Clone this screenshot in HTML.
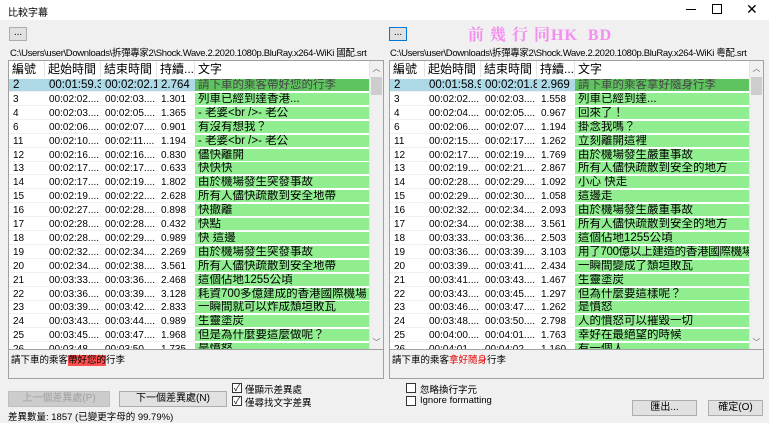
<!DOCTYPE html>
<html><head><meta charset="utf-8"><style>
*{box-sizing:border-box;margin:0;padding:0}
body{width:769px;height:421px;background:#f0f0f0;font-family:"Liberation Sans","Noto Sans CJK TC",sans-serif;position:relative;overflow:hidden;color:#000}
.abs{position:absolute}
.title{top:0;left:0;width:769px;height:20px;background:#fff}
.list{position:absolute;top:60px;height:290px;background:#fff;border:1px solid #a0a0a0;overflow:hidden}
.hdr{position:absolute;top:0;left:0;height:16px;font-size:12px;line-height:16px}
.hdr span{position:absolute;top:0;height:16px;border-right:1px solid #e5e5e5;padding-left:3px;white-space:nowrap;overflow:hidden}
.row{position:absolute;left:0;height:13.9px;font-size:10px;line-height:13px}
.row span{position:absolute;top:0;height:13px;padding-left:4px;white-space:nowrap;overflow:hidden;border-bottom:1px solid #f0f0f0}
.row span.t{background:#90ee90;font-size:11.5px;border-bottom:1px solid #fff;padding-left:3px}
.sel span{background:#add8e6;font-size:11.5px}
.sel span.t{background:#5fc35f;color:#444}
.sb{position:absolute;top:0;width:14px;height:290px;background:#f0f0f0;border-left:1px solid #e5e5e5}
.sb i{position:absolute;left:1px;top:16px;width:11px;height:18px;background:#cdcdcd}
.sb b{position:absolute;left:0;width:13px;text-align:center;font-size:8px;color:#606060;font-weight:normal}
.tb{position:absolute;top:349px;height:30px;background:#f0f0f0;border:1px solid #a0a0a0;font-size:9.5px;padding:2px 2px}
.btn{position:absolute;background:#e1e1e1;border:1px solid #adadad;font-size:10px;text-align:center;line-height:14px}
.cb{position:absolute;width:10px;height:10px;border:1px solid #333;background:#fff;font-size:9px;line-height:8px;text-align:center}
.lbl{position:absolute;font-size:9.5px}
</style></head><body>
<div class="abs title"></div>
<div class="abs" style="left:8px;top:4px;font-size:10px">比較字幕</div>
<div class="abs" style="left:686px;top:9px;width:10px;height:1px;background:#000"></div>
<div class="abs" style="left:712px;top:4px;width:10px;height:10px;border:1px solid #000"></div>
<div class="abs" style="left:746px;top:1px;font-size:14px;line-height:16px">✕</div>
<div class="btn" style="left:9px;top:27px;width:18px;height:14px;line-height:10px">...</div>
<div class="btn" style="left:389px;top:27px;width:18px;height:14px;line-height:10px;border-color:#0078d7">...</div>
<div class="abs" style="left:468px;top:22px;font-family:'Liberation Serif','Noto Serif CJK SC',serif;font-weight:bold;font-size:16px;color:#f58cf0;letter-spacing:1px">前 幾 行 同HK&nbsp;&nbsp;BD</div>
<div class="abs" style="left:10px;top:45px;font-size:9.5px;letter-spacing:-0.35px">C:\Users\user\Downloads\拆彈專家2\Shock.Wave.2.2020.1080p.BluRay.x264-WiKi 國配.srt</div>
<div class="abs" style="left:390px;top:45px;font-size:9.5px;letter-spacing:-0.35px">C:\Users\user\Downloads\拆彈專家2\Shock.Wave.2.2020.1080p.BluRay.x264-WiKi 粵配.srt</div>

<div class="list" style="left:8px;width:376px">
<div class="hdr"><span style="left:0;width:36px">編號</span><span style="left:36px;width:56px">起始時間</span><span style="left:92px;width:56px">結束時間</span><span style="left:148px;width:38px">持續...</span><span style="left:186px;width:176px">文字</span></div>
<div class="row sel" style="top:18px"><span style="left:0;width:36px">2</span><span style="left:36px;width:56px">00:01:59.35</span><span style="left:92px;width:56px">00:02:02.11</span><span style="left:148px;width:38px">2.764</span><span class="t" style="left:186px;width:174px">請下車的乘客帶好您的行李</span></div>
<div class="row" style="top:31.9px"><span style="left:0;width:36px">3</span><span style="left:36px;width:56px">00:02:02....</span><span style="left:92px;width:56px">00:02:03....</span><span style="left:148px;width:38px">1.301</span><span class="t" style="left:186px;width:174px">列車已經到達香港...</span></div>
<div class="row" style="top:45.8px"><span style="left:0;width:36px">4</span><span style="left:36px;width:56px">00:02:03....</span><span style="left:92px;width:56px">00:02:05....</span><span style="left:148px;width:38px">1.365</span><span class="t" style="left:186px;width:174px">- 老婆&lt;br /&gt;- 老公</span></div>
<div class="row" style="top:59.7px"><span style="left:0;width:36px">6</span><span style="left:36px;width:56px">00:02:06....</span><span style="left:92px;width:56px">00:02:07....</span><span style="left:148px;width:38px">0.901</span><span class="t" style="left:186px;width:174px">有沒有想我？</span></div>
<div class="row" style="top:73.6px"><span style="left:0;width:36px">11</span><span style="left:36px;width:56px">00:02:10....</span><span style="left:92px;width:56px">00:02:11....</span><span style="left:148px;width:38px">1.194</span><span class="t" style="left:186px;width:174px">- 老婆&lt;br /&gt;- 老公</span></div>
<div class="row" style="top:87.5px"><span style="left:0;width:36px">12</span><span style="left:36px;width:56px">00:02:16....</span><span style="left:92px;width:56px">00:02:16....</span><span style="left:148px;width:38px">0.830</span><span class="t" style="left:186px;width:174px">儘快離開</span></div>
<div class="row" style="top:101.4px"><span style="left:0;width:36px">13</span><span style="left:36px;width:56px">00:02:17....</span><span style="left:92px;width:56px">00:02:17....</span><span style="left:148px;width:38px">0.633</span><span class="t" style="left:186px;width:174px">快快快</span></div>
<div class="row" style="top:115.3px"><span style="left:0;width:36px">14</span><span style="left:36px;width:56px">00:02:17....</span><span style="left:92px;width:56px">00:02:19....</span><span style="left:148px;width:38px">1.802</span><span class="t" style="left:186px;width:174px">由於機場發生突發事故</span></div>
<div class="row" style="top:129.2px"><span style="left:0;width:36px">15</span><span style="left:36px;width:56px">00:02:19....</span><span style="left:92px;width:56px">00:02:22....</span><span style="left:148px;width:38px">2.628</span><span class="t" style="left:186px;width:174px">所有人儘快疏散到安全地帶</span></div>
<div class="row" style="top:143.1px"><span style="left:0;width:36px">16</span><span style="left:36px;width:56px">00:02:27....</span><span style="left:92px;width:56px">00:02:28....</span><span style="left:148px;width:38px">0.898</span><span class="t" style="left:186px;width:174px">快撤離</span></div>
<div class="row" style="top:157px"><span style="left:0;width:36px">17</span><span style="left:36px;width:56px">00:02:28....</span><span style="left:92px;width:56px">00:02:28....</span><span style="left:148px;width:38px">0.432</span><span class="t" style="left:186px;width:174px">快點</span></div>
<div class="row" style="top:170.9px"><span style="left:0;width:36px">18</span><span style="left:36px;width:56px">00:02:28....</span><span style="left:92px;width:56px">00:02:29....</span><span style="left:148px;width:38px">0.989</span><span class="t" style="left:186px;width:174px">快 這邊</span></div>
<div class="row" style="top:184.8px"><span style="left:0;width:36px">19</span><span style="left:36px;width:56px">00:02:32....</span><span style="left:92px;width:56px">00:02:34....</span><span style="left:148px;width:38px">2.269</span><span class="t" style="left:186px;width:174px">由於機場發生突發事故</span></div>
<div class="row" style="top:198.7px"><span style="left:0;width:36px">20</span><span style="left:36px;width:56px">00:02:34....</span><span style="left:92px;width:56px">00:02:38....</span><span style="left:148px;width:38px">3.561</span><span class="t" style="left:186px;width:174px">所有人儘快疏散到安全地帶</span></div>
<div class="row" style="top:212.6px"><span style="left:0;width:36px">21</span><span style="left:36px;width:56px">00:03:33....</span><span style="left:92px;width:56px">00:03:36....</span><span style="left:148px;width:38px">2.468</span><span class="t" style="left:186px;width:174px">這個佔地1255公頃</span></div>
<div class="row" style="top:226.5px"><span style="left:0;width:36px">22</span><span style="left:36px;width:56px">00:03:36....</span><span style="left:92px;width:56px">00:03:39....</span><span style="left:148px;width:38px">3.128</span><span class="t" style="left:186px;width:174px">耗資700多億建成的香港國際機場</span></div>
<div class="row" style="top:240.4px"><span style="left:0;width:36px">23</span><span style="left:36px;width:56px">00:03:39....</span><span style="left:92px;width:56px">00:03:42....</span><span style="left:148px;width:38px">2.833</span><span class="t" style="left:186px;width:174px">一瞬間就可以炸成頹垣敗瓦</span></div>
<div class="row" style="top:254.3px"><span style="left:0;width:36px">24</span><span style="left:36px;width:56px">00:03:43....</span><span style="left:92px;width:56px">00:03:44....</span><span style="left:148px;width:38px">0.989</span><span class="t" style="left:186px;width:174px">生靈塗炭</span></div>
<div class="row" style="top:268.2px"><span style="left:0;width:36px">25</span><span style="left:36px;width:56px">00:03:45....</span><span style="left:92px;width:56px">00:03:47....</span><span style="left:148px;width:38px">1.968</span><span class="t" style="left:186px;width:174px">但是為什麼要這麼做呢？</span></div>
<div class="row" style="top:282.1px"><span style="left:0;width:36px">26</span><span style="left:36px;width:56px">00:03:48</span><span style="left:92px;width:56px">00:03:50</span><span style="left:148px;width:38px">1.735</span><span class="t" style="left:186px;width:174px">是憤怒</span></div>
<div class="sb" style="left:360px"><b style="top:2px">︿</b><i></i><b style="top:276px">﹀</b></div>
</div>

<div class="list" style="left:389px;width:375px">
<div class="hdr"><span style="left:0;width:35px">編號</span><span style="left:35px;width:56px">起始時間</span><span style="left:91px;width:56px">結束時間</span><span style="left:147px;width:38px">持續...</span><span style="left:185px;width:175px">文字</span></div>
<div class="row sel" style="top:18px"><span style="left:0;width:35px">2</span><span style="left:35px;width:56px">00:01:58.91</span><span style="left:91px;width:56px">00:02:01.88</span><span style="left:147px;width:38px">2.969</span><span class="t" style="left:185px;width:174px">請下車的乘客拿好隨身行李</span></div>
<div class="row" style="top:31.9px"><span style="left:0;width:35px">3</span><span style="left:35px;width:56px">00:02:02....</span><span style="left:91px;width:56px">00:02:03....</span><span style="left:147px;width:38px">1.558</span><span class="t" style="left:185px;width:174px">列車已經到達...</span></div>
<div class="row" style="top:45.8px"><span style="left:0;width:35px">4</span><span style="left:35px;width:56px">00:02:04....</span><span style="left:91px;width:56px">00:02:05....</span><span style="left:147px;width:38px">0.967</span><span class="t" style="left:185px;width:174px">回來了！</span></div>
<div class="row" style="top:59.7px"><span style="left:0;width:35px">6</span><span style="left:35px;width:56px">00:02:06....</span><span style="left:91px;width:56px">00:02:07....</span><span style="left:147px;width:38px">1.194</span><span class="t" style="left:185px;width:174px">掛念我嗎？</span></div>
<div class="row" style="top:73.6px"><span style="left:0;width:35px">11</span><span style="left:35px;width:56px">00:02:15....</span><span style="left:91px;width:56px">00:02:17....</span><span style="left:147px;width:38px">1.262</span><span class="t" style="left:185px;width:174px">立刻離開這裡</span></div>
<div class="row" style="top:87.5px"><span style="left:0;width:35px">12</span><span style="left:35px;width:56px">00:02:17....</span><span style="left:91px;width:56px">00:02:19....</span><span style="left:147px;width:38px">1.769</span><span class="t" style="left:185px;width:174px">由於機場發生嚴重事故</span></div>
<div class="row" style="top:101.4px"><span style="left:0;width:35px">13</span><span style="left:35px;width:56px">00:02:19....</span><span style="left:91px;width:56px">00:02:21....</span><span style="left:147px;width:38px">2.867</span><span class="t" style="left:185px;width:174px">所有人儘快疏散到安全的地方</span></div>
<div class="row" style="top:115.3px"><span style="left:0;width:35px">14</span><span style="left:35px;width:56px">00:02:28....</span><span style="left:91px;width:56px">00:02:29....</span><span style="left:147px;width:38px">1.092</span><span class="t" style="left:185px;width:174px">小心 快走</span></div>
<div class="row" style="top:129.2px"><span style="left:0;width:35px">15</span><span style="left:35px;width:56px">00:02:29....</span><span style="left:91px;width:56px">00:02:30....</span><span style="left:147px;width:38px">1.058</span><span class="t" style="left:185px;width:174px">這邊走</span></div>
<div class="row" style="top:143.1px"><span style="left:0;width:35px">16</span><span style="left:35px;width:56px">00:02:32....</span><span style="left:91px;width:56px">00:02:34....</span><span style="left:147px;width:38px">2.093</span><span class="t" style="left:185px;width:174px">由於機場發生嚴重事故</span></div>
<div class="row" style="top:157px"><span style="left:0;width:35px">17</span><span style="left:35px;width:56px">00:02:34....</span><span style="left:91px;width:56px">00:02:38....</span><span style="left:147px;width:38px">3.561</span><span class="t" style="left:185px;width:174px">所有人儘快疏散到安全的地方</span></div>
<div class="row" style="top:170.9px"><span style="left:0;width:35px">18</span><span style="left:35px;width:56px">00:03:33....</span><span style="left:91px;width:56px">00:03:36....</span><span style="left:147px;width:38px">2.503</span><span class="t" style="left:185px;width:174px">這個佔地1255公頃</span></div>
<div class="row" style="top:184.8px"><span style="left:0;width:35px">19</span><span style="left:35px;width:56px">00:03:36....</span><span style="left:91px;width:56px">00:03:39....</span><span style="left:147px;width:38px">3.103</span><span class="t" style="left:185px;width:174px;letter-spacing:-0.3px">用了700億以上建造的香港國際機場</span></div>
<div class="row" style="top:198.7px"><span style="left:0;width:35px">20</span><span style="left:35px;width:56px">00:03:39....</span><span style="left:91px;width:56px">00:03:41....</span><span style="left:147px;width:38px">2.434</span><span class="t" style="left:185px;width:174px">一瞬間變成了頹垣敗瓦</span></div>
<div class="row" style="top:212.6px"><span style="left:0;width:35px">21</span><span style="left:35px;width:56px">00:03:41....</span><span style="left:91px;width:56px">00:03:43....</span><span style="left:147px;width:38px">1.467</span><span class="t" style="left:185px;width:174px">生靈塗炭</span></div>
<div class="row" style="top:226.5px"><span style="left:0;width:35px">22</span><span style="left:35px;width:56px">00:03:43....</span><span style="left:91px;width:56px">00:03:45....</span><span style="left:147px;width:38px">1.297</span><span class="t" style="left:185px;width:174px">但為什麼要這樣呢？</span></div>
<div class="row" style="top:240.4px"><span style="left:0;width:35px">23</span><span style="left:35px;width:56px">00:03:46....</span><span style="left:91px;width:56px">00:03:47....</span><span style="left:147px;width:38px">1.262</span><span class="t" style="left:185px;width:174px">是憤怒</span></div>
<div class="row" style="top:254.3px"><span style="left:0;width:35px">24</span><span style="left:35px;width:56px">00:03:48....</span><span style="left:91px;width:56px">00:03:50....</span><span style="left:147px;width:38px">2.798</span><span class="t" style="left:185px;width:174px">人的憤怒可以摧毀一切</span></div>
<div class="row" style="top:268.2px"><span style="left:0;width:35px">25</span><span style="left:35px;width:56px">00:04:00....</span><span style="left:91px;width:56px">00:04:01....</span><span style="left:147px;width:38px">1.763</span><span class="t" style="left:185px;width:174px">幸好在最絕望的時候</span></div>
<div class="row" style="top:282.1px"><span style="left:0;width:35px">26</span><span style="left:35px;width:56px">00:04:01</span><span style="left:91px;width:56px">00:04:02</span><span style="left:147px;width:38px">1.160</span><span class="t" style="left:185px;width:174px">有一個人</span></div>
<div class="sb" style="left:359px"><b style="top:2px">︿</b><i></i><b style="top:276px">﹀</b></div>
</div>

<div class="tb" style="left:8px;width:376px">請下車的乘客<span style="background:#ff5050">帶好您的</span>行李</div>
<div class="tb" style="left:389px;width:375px">請下車的乘客<span style="color:#e00000">拿好隨身</span>行李</div>

<div class="btn" style="left:8px;top:391px;width:102px;height:16px;color:#a0a0a0;background:#cccccc;border-color:#bfbfbf">上一個差異處(P)</div>
<div class="btn" style="left:119px;top:391px;width:108px;height:16px">下一個差異處(N)</div>
<div class="cb" style="left:232px;top:383px">✓</div><div class="lbl" style="left:245px;top:382px">僅顯示差異處</div>
<div class="cb" style="left:232px;top:396px">✓</div><div class="lbl" style="left:245px;top:395px">僅尋找文字差異</div>
<div class="cb" style="left:406px;top:383px"></div><div class="lbl" style="left:420px;top:382px">忽略換行字元</div>
<div class="cb" style="left:406px;top:396px"></div><div class="lbl" style="left:420px;top:395px">Ignore formatting</div>
<div class="btn" style="left:632px;top:400px;width:65px;height:16px">匯出...</div>
<div class="btn" style="left:708px;top:400px;width:55px;height:16px">確定(O)</div>
<div class="lbl" style="left:8px;top:409px">差異數量: 1857 (已變更字母的 99.79%)</div>
</body></html>
